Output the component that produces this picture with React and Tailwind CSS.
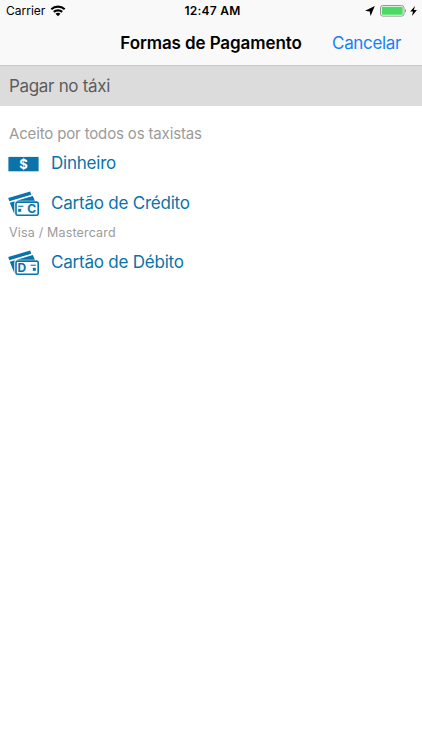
import React from "react";

const WifiIcon = () => (
    <svg width="16" height="12" viewBox="0 0 16 12" fill="none" stroke="#000" strokeWidth="2.1">
        <path d="M1.3 4.2C5 0.8 11 0.8 14.7 4.2" />
        <path d="M3.8 6.9C6.1 4.8 9.9 4.8 12.2 6.9" />
        <path d="M8 11.2L5.5 8.8C6.9 7.5 9.1 7.5 10.5 8.8Z" fill="#000" stroke="none" />
    </svg>
);

const LocationIcon = () => (
    <svg width="10" height="10" viewBox="0 0 10 10">
        <path d="M9.8 0.1L5.6 9.9L4.7 5.4L0.1 4.8Z" fill="#000" />
    </svg>
);

const BatteryIcon = () => (
    <svg width="27" height="12" viewBox="0 0 27 12">
        <rect x="0.5" y="0.5" width="23.5" height="10.6" rx="2.3" fill="#fff" stroke="#8b8b8b" strokeWidth="0.9" />
        <rect x="1.8" y="1.8" width="20.9" height="8" rx="0.9" fill="#4cd964" />
        <path d="M25 4C26.3 4.4 26.3 7.2 25 7.6Z" fill="#8b8b8b" />
    </svg>
);

const BoltIcon = () => (
    <svg width="7" height="10" viewBox="0 0 7 10">
        <path d="M5 0L0.2 5.6H3L2 10L6.9 4.1H3.9Z" fill="#000" />
    </svg>
);

const MoneyIcon = () => (
    <svg width="31" height="16" viewBox="0 0 31 16">
        <rect x="0.4" y="0.9" width="30.2" height="14.4" fill="#0973aa" />
        <text x="15.4" y="12.8" textAnchor="middle" fontSize="13" fontWeight="700" fontFamily="Inter, sans-serif" fill="#fff">
            $
        </text>
    </svg>
);

const CardIcon = ({ letter }) => {
    const credit = letter === "C";
    return (
        <svg width="32" height="26" viewBox="0 0 32 26" fill="#0973aa">
            <path d="M0.2 7L22.2 0.5L23.3 3.7L1.3 10.3Z" />
            <path d="M1.8 11.7L24.8 5L26.9 9.8H8.7Q6.3 9.8 6.3 12.2V23Z" />
            <rect x="8" y="11.1" width="22.2" height="13.2" rx="1.6" fill="#fff" stroke="#0973aa" strokeWidth="1.6" />
            <text
                x={credit ? 23.8 : 13.8}
                y="22"
                textAnchor="middle"
                fontSize="12"
                fontWeight="700"
                fontFamily="Inter, sans-serif"
            >
                {letter}
            </text>
            <rect x={credit ? 10.2 : 22.6} y="14.7" width="5.2" height="1.1" />
            <rect x={credit ? 10.2 : 24.8} y="17.8" width="3" height="3" />
        </svg>
    );
};

const PaymentOption = ({ icon, label }) => (
    <button className="flex h-[30px] w-full items-center pl-2 text-left">
        <span className="w-[43px] pt-px">{icon}</span>
        <span className="text-[17px] leading-[22px] tracking-[-0.22px] text-[#0973aa]">{label}</span>
    </button>
);

const App = () => {
    return (
        <div className="h-[750px] w-[422px] overflow-hidden bg-white font-['Inter',sans-serif]">
            <header className="h-[66px] border-b border-[#c9c9c9] bg-[#f9f9f9]">
                <div className="grid h-[22px] grid-cols-3 items-center px-[6px] text-black">
                    <div className="flex items-center gap-[5px]">
                        <span className="text-[12px]">Carrier</span>
                        <WifiIcon />
                    </div>
                    <span className="whitespace-nowrap pl-[3px] text-center text-[12px] font-semibold tracking-[0.25px]">12:47 AM</span>
                    <div className="-mr-[1px] flex items-center justify-end gap-[3px]">
                        <span className="mr-[2px]">
                            <LocationIcon />
                        </span>
                        <BatteryIcon />
                        <BoltIcon />
                    </div>
                </div>
                <div className="grid h-[43px] grid-cols-[1fr_auto_1fr] items-center">
                    <span />
                    <h1 className="text-[17px] font-semibold tracking-[-0.1px] text-black">Formas de Pagamento</h1>
                    <button className="pr-[21px] text-right text-[17px] tracking-[-0.35px] text-[#1481fa]">Cancelar</button>
                </div>
            </header>

            <h2 className="flex h-10 items-center bg-[#dcdcdc] pt-[2px] pl-[9px] text-[17px] tracking-[-0.32px] text-[#5c5c5e]">
                Pagar no táxi
            </h2>

            <main className="pt-[17px]">
                <p className="h-[25px] pl-[9px] text-[15px] leading-[21px] tracking-[-0.15px] text-[#9b9b9b]">
                    Aceito por todos os taxistas
                </p>
                <PaymentOption icon={<MoneyIcon />} label="Dinheiro" />
                <div className="pt-[10px]">
                    <PaymentOption icon={<CardIcon letter="C" />} label="Cartão de Crédito" />
                </div>
                <p className="h-[29px] pl-[9px] pt-[6px] text-[12.5px] leading-[18px] tracking-[0.17px] text-[#9b9b9b]">
                    Visa / Mastercard
                </p>
                <PaymentOption icon={<CardIcon letter="D" />} label="Cartão de Débito" />
            </main>
        </div>
    );
};

export default App;
